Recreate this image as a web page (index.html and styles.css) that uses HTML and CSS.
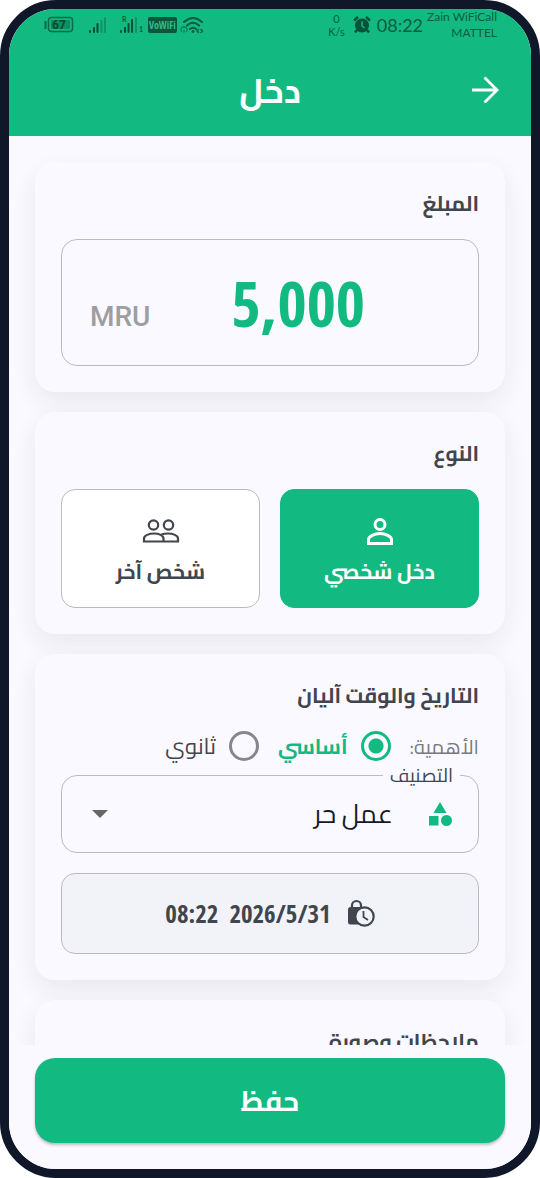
FILE: index.html
```html
<!DOCTYPE html>
<html lang="ar" dir="rtl">
<head>
<meta charset="utf-8">
<meta name="viewport" content="width=device-width, initial-scale=1">
<title>دخل</title>
<link rel="stylesheet" href="styles.css">
</head>
<body>
<div class="phone">
  <header class="header">
    <div class="status" dir="ltr">
      <div class="status-group">
        <svg class="battery" width="30" height="18" viewBox="0 0 30 18" role="img" aria-label="67%"><path d="M1.500 5v8" stroke="#0b6b4a" stroke-width="2"/><rect x="4.500" y="1.500" width="24" height="14" rx="3" fill="none" stroke="#0b6b4a" stroke-width="1.500"/><rect x="7" y="4" width="19" height="9" rx="1" fill="#0e8e62"/><text x="15" y="13" text-anchor="middle" class="battery-text">67</text></svg>
        <svg class="signal" width="18" height="18" viewBox="0 0 18 18" fill="none" stroke="#0a4d37" stroke-width="2" stroke-linecap="round"><path d="M2 15v1M6 12v4M9.500 8v8"/><path d="M13.500 5v11M17 2v14" stroke="#0e9567"/></svg>
        <svg class="signal-two" width="24" height="18" viewBox="0 0 24 18"><g fill="none" stroke="#0a4d37" stroke-width="2" stroke-linecap="round"><path d="M2 15v1M6 12v4M9.500 8v8M13 4v12"/><path d="M17 2v14" stroke="#0e9567"/></g><text x="3" y="6" class="tiny-text">R</text><text x="20" y="16" class="tiny-text">1</text></svg>
        <span class="vowifi">VoWiFi</span>
        <svg class="wifi" width="24" height="18" viewBox="0 0 24 18" fill="none" stroke="#0b5c41" stroke-width="2" stroke-linecap="round"><path d="M4 6q9-8 18 0M7 9.500q6-5.500 12 0M10 13q3-2.500 6 0"/><circle cx="13" cy="15.500" r="1.400" fill="#0b5c41" stroke="none"/><path d="M1.500 15.500a3 3 0 1 1 5 0M4 14v2" stroke="#0e8158" stroke-width="1.300"/><path d="M18.500 13.500l-1.500 1.500 1.500 1.500M21 13.500l1.500 1.500-1.500 1.500" stroke-width="1.400"/></svg>
      </div>
      <div class="status-group">
        <span class="speed">0<br>K/s</span>
        <svg class="alarm" width="18" height="18" viewBox="0 0 18 18" fill="#07533a"><circle cx="9" cy="9.500" r="7"/><path d="M1 4.500L5 1M17 4.500L13 1M4 14l-2 2.500M14 14l2 2.500" stroke="#07533a" stroke-width="2.500"/><path d="M9 5.500V10l2.500 2" fill="none" stroke="#12b981" stroke-width="1.500"/></svg>
        <span class="clock">08:22</span>
        <span class="carrier">Zain WiFiCall<br>MATTEL</span>
      </div>
    </div>
    <div class="appbar">
      <button class="back" type="button" aria-label="رجوع"><svg width="28" height="28" viewBox="0 0 28 28" fill="none" stroke="#fff" stroke-width="2.800"><path d="M0 15h25M12.500 2.500L25 15 12.500 27.500"/></svg></button>
      <h1 class="title">دخل</h1>
    </div>
  </header>

  <main class="content">
    <section class="card">
      <h2 class="card-title"><label for="amount">المبلغ</label></h2>
      <div class="amount-box">
        <input class="amount" id="amount" type="text" inputmode="decimal" value="5,000" dir="ltr">
        <span class="currency">MRU</span>
      </div>
    </section>

    <section class="card">
      <h2 class="card-title">النوع</h2>
      <div class="types">
        <button class="type type-active" type="button" aria-pressed="true">
          <svg width="40" height="32" viewBox="0 0 40 32" fill="none" stroke="currentColor" stroke-width="3"><circle cx="20" cy="8.500" r="5"/><path d="M8.500 27.500v-4c0-3 6-6 11.500-6s11.500 3 11.500 6v4z"/></svg>
          <span>دخل شخصي</span>
        </button>
        <button class="type" type="button" aria-pressed="false">
          <svg width="40" height="32" viewBox="0 0 40 32" fill="none" stroke="currentColor" stroke-width="2.200"><circle cx="12.500" cy="9" r="4.700"/><circle cx="27.500" cy="9" r="4.700"/><path d="M3 25.500v-3c0-3 5-5 10-5s9.500 2 9.500 5v3zM20.500 18.500c2-.7 4-1 6.500-1 5 0 10 2 10 5v3H23"/></svg>
          <span>شخص آخر</span>
        </button>
      </div>
    </section>

    <section class="card">
      <h2 class="card-title title-tight">التاريخ والوقت آليان</h2>
      <div class="priority" role="radiogroup" aria-labelledby="priority-label">
        <span class="priority-label" id="priority-label">الأهمية:</span>
        <label class="choice"><input class="radio" type="radio" name="priority" checked><span class="choice-text">أساسي</span></label>
        <label class="choice"><input class="radio" type="radio" name="priority"><span class="choice-text">ثانوي</span></label>
      </div>
      <fieldset class="category">
        <legend class="legend"><label for="category">التصنيف</label></legend>
        <svg class="shapes" width="26" height="26" viewBox="0 0 26 26" fill="#12b981"><path d="M13 1l6.500 11h-13z"/><path d="M2 15h9.500v9.500H2z"/><circle cx="19.500" cy="19.500" r="5.500"/></svg>
        <select class="select" id="category"><option>عمل حر</option></select>
        <svg class="caret" width="16" height="8" viewBox="0 0 16 8" fill="#666"><path d="M0 0h16L8 8z"/></svg>
      </fieldset>
      <div class="datetime">
        <svg width="28" height="28" viewBox="0 0 28 28"><path d="M5 10V6.500a4.500 4.500 0 0 1 9 0V10" fill="none" stroke="#41454d" stroke-width="2.200"/><rect x="1" y="8" width="18" height="17.500" rx="2.500" fill="#41454d"/><circle cx="17.500" cy="17.500" r="9.200" fill="#f2f3f9" stroke="#41454d" stroke-width="2.200"/><path d="M16.500 12v6l4.500 3" fill="none" stroke="#41454d" stroke-width="1.800"/></svg>
        <span class="moment" dir="ltr"><time>08:22</time><time>2026/5/31</time></span>
      </div>
    </section>

    <section class="card">
      <h2 class="card-title">ملاحظات وصورة</h2>
    </section>
  </main>

  <footer class="footer"><button class="save" type="button">حفظ</button></footer>
</div>
</body>
</html>
```
FILE: styles.css
```css
* { box-sizing: border-box; }
body { margin: 0; background: #fff; font-family: Cairo, "Noto Sans Arabic", "Noto Sans", "DejaVu Sans", sans-serif; color: #41454d; }
button, input, select { font: inherit; color: inherit; }
svg { display: block; flex: none; }
.phone { height: 100vh; display: flex; flex-direction: column; overflow: hidden; background: #faf9ff; border: 9px solid #101729; border-radius: 56px; }

.header { flex: none; background: #12b981; color: #fff; }
.status { display: flex; justify-content: space-between; height: 32px; padding: 0 34px 0 35px; color: #0b5c41; font-family: Lato, sans-serif; }
.status-group { display: flex; align-items: center; }
.battery-text { font: bold 12px Roboto, sans-serif; fill: #07482f; }
.tiny-text { font: bold 7px Lato, sans-serif; fill: #0a5c41; }
.signal { margin-left: 14px; }
.signal-two { margin-left: 13px; }
.vowifi { min-width: 28px; margin: 0 4px 0 5px; padding: 0 1px; border-radius: 2px; background: #09583d; color: #35bd8d; font: bold 10px/16px "Open Sans Condensed", "Open Sans", sans-serif; text-align: center; }
.wifi { margin-left: -1px; }
.speed { font-size: 11px; line-height: 13px; text-align: center; }
.alarm { margin: 0 6px 0 8px; }
.clock { font-size: 18px; }
.carrier { margin-left: 4px; font-size: 12px; line-height: 16px; text-align: right; white-space: nowrap; }
.appbar { display: grid; grid-template-columns: 48px 1fr 48px; align-items: center; height: 95px; padding: 0 21px; }
.back { display: flex; align-items: center; justify-content: center; height: 48px; padding: 0; border: 0; background: none; }
.title { margin: 0; padding-top: 4px; text-align: center; font-size: 34px; line-height: 48px; font-weight: 700; }

.content { flex: 1; min-height: 0; overflow: hidden; display: flex; flex-direction: column; gap: 20px; padding: 26px 26px 0; }
.card { flex: none; padding: 26px; border-radius: 20px; background: #faf9ff; box-shadow: 0 10px 26px rgba(40, 35, 50, .08); }
.card-title { margin: 0 0 20px; font-size: 21px; line-height: 31px; font-weight: 700; }
.title-tight { margin-bottom: 6px; }

.amount-box { display: flex; align-items: center; height: 127px; padding: 0 28px; border: 1px solid #b9bbc4; border-radius: 16px; }
.amount { flex: 1; min-width: 0; padding: 0 4px 0 0; border: 0; background: none; text-align: center; color: #12b981; font: bold 63px/80px "Open Sans Condensed", "Open Sans", sans-serif; }
.currency { padding-top: 28px; color: #9e9e9e; font: 500 28px/34px Roboto, sans-serif; }

.types { display: grid; grid-template-columns: 1fr 1fr; gap: 20px; }
.type { display: flex; flex-direction: column; align-items: center; justify-content: center; gap: 8px; height: 119px; padding: 6px 0 0; border: 1px solid #b9bbc4; border-radius: 14px; background: #fff; font-size: 21px; line-height: 32px; font-weight: 700; }
.type-active { border-color: #12b981; background: #12b981; color: #fff; }

.priority { display: flex; align-items: center; height: 48px; padding-top: 10px; font-size: 20px; }
.priority-label { margin-left: 19px; color: #77797f; }
.choice { display: flex; align-items: center; gap: 13px; margin-left: 19px; font-size: 22px; }
.radio { appearance: none; width: 30px; height: 30px; margin: 0; border: 3px solid #85878e; border-radius: 50%; }
.radio:checked { border-color: #12b981; background: radial-gradient(circle, #12b981 7px, transparent 8px); }
.radio:checked + .choice-text { color: #12b981; font-size: 21px; font-weight: 700; }

.category { display: flex; align-items: center; min-width: 0; height: 88px; margin: 0; padding: 0; padding-inline: 18px 44px; padding-bottom: 10px; border: 1px solid #b9bbc4; border-radius: 16px; }
.legend { padding: 0 7px; font-size: 19px; line-height: 20px; }
.shapes { margin: 0 7px 0 34px; }
.select { flex: 1; min-width: 0; padding: 0; border: 0; appearance: none; background: none; color: #18191e; font-size: 26px; line-height: 40px; }
.caret { margin-left: -14px; }

.datetime { display: flex; align-items: center; justify-content: center; gap: 16px; height: 81px; margin-top: 20px; padding-bottom: 2px; border: 1px solid #b9bbc4; border-radius: 14px; background: #f2f3f9; }
.moment { display: flex; gap: 11px; font: bold 25px/32px "Open Sans Condensed", "Open Sans", sans-serif; }

.footer { flex: none; padding: 13px 26px 26px; background: #faf9ff; }
.save { display: block; width: 100%; height: 85px; border: 0; border-radius: 20px; background: #12b981; color: #fff; font-size: 28px; font-weight: 700; box-shadow: 0 2px 3px rgba(0, 0, 0, .25); }
```
